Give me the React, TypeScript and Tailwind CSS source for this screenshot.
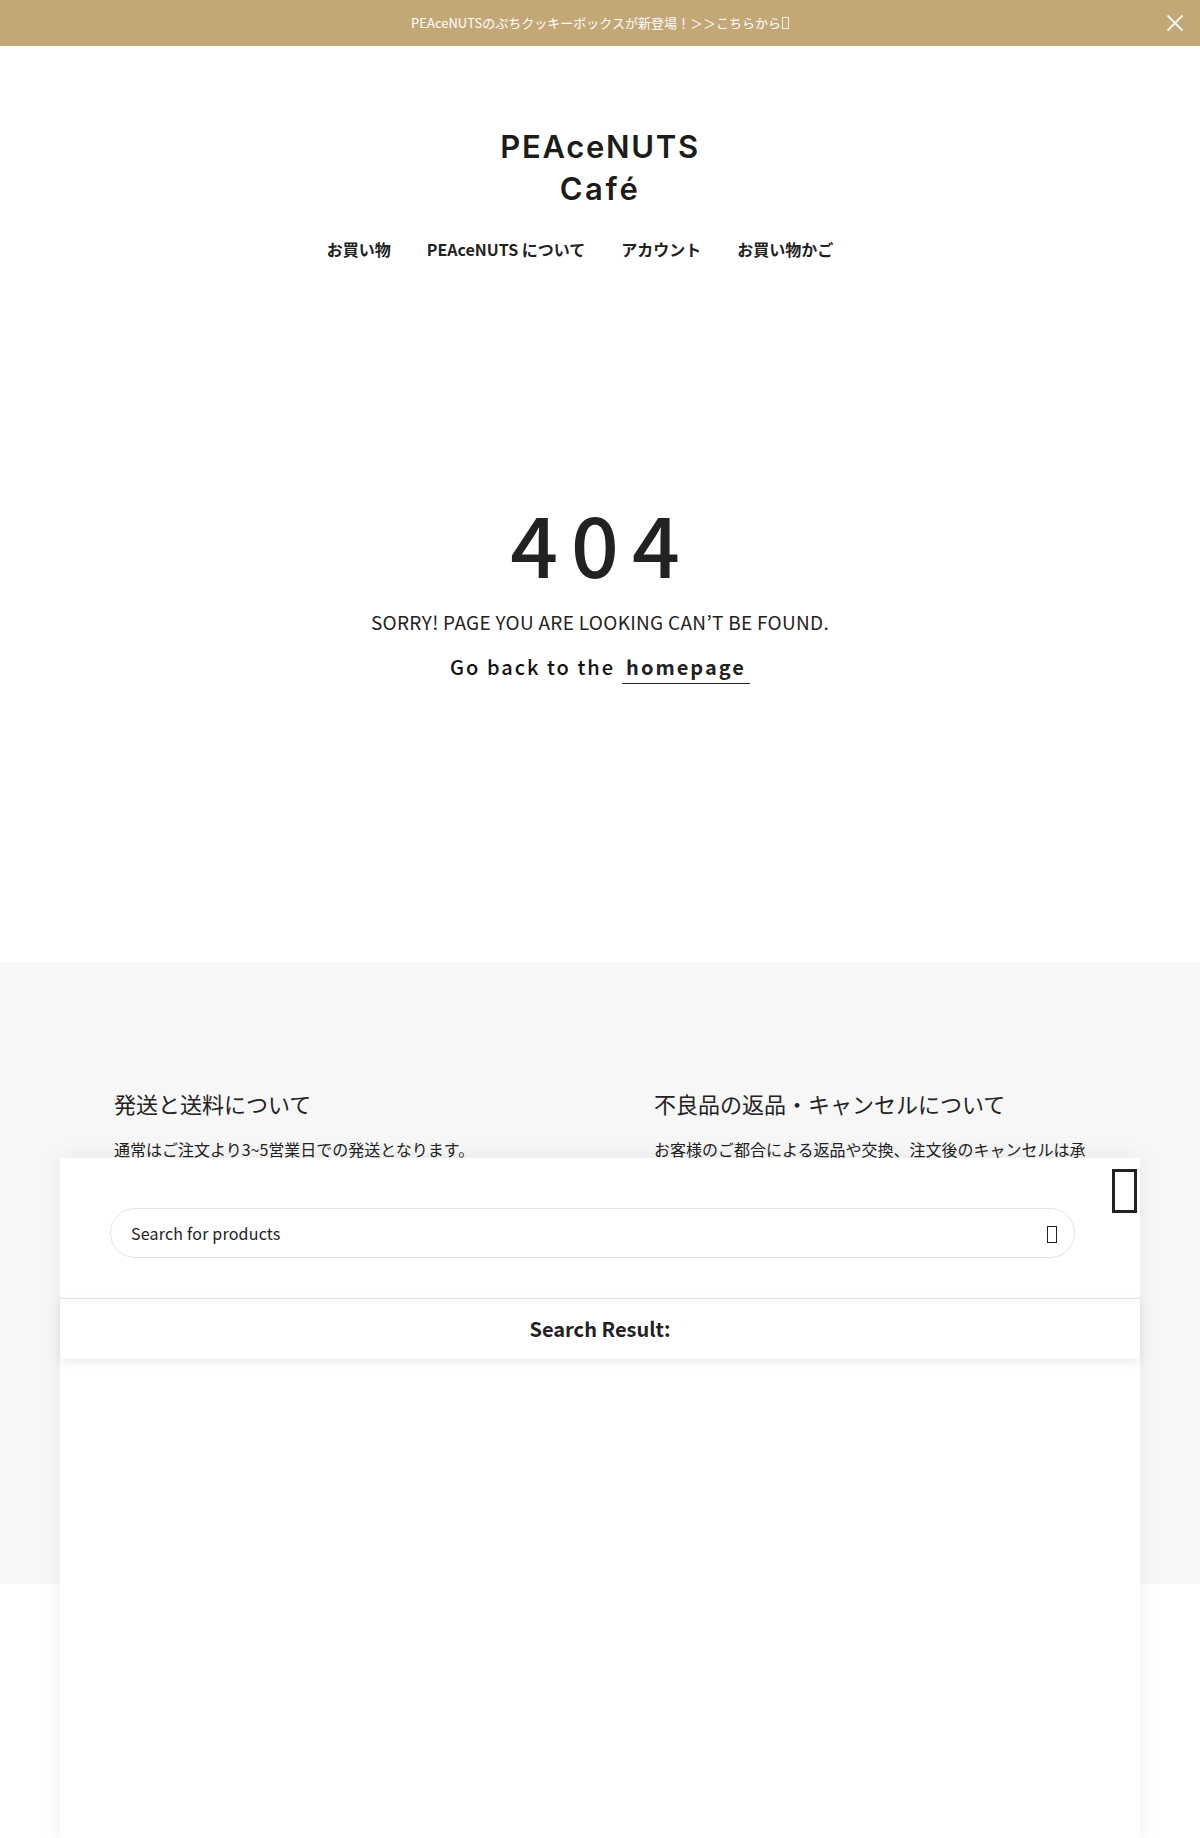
import React from "react";

const sans = "font-['Noto_Sans_CJK_JP','Noto_Sans',sans-serif]";

function Tofu({ className }: { className: string }) {
  return <span className={`inline-block border-[#222] ${className}`} />;
}

export default function App() {
  return (
    <div className={`relative h-[1838px] w-[1200px] overflow-hidden bg-white text-[#222] ${sans}`}>
      <div className="relative flex h-[46px] items-center justify-center bg-[#c4a777] text-[13px] text-white">
        <span className="flex items-center">
          PEAceNUTSのぷちクッキーボックスが新登場！＞＞こちらから
          <span className="ml-[1px] inline-block h-[12px] w-[7px] border border-white/80" />
        </span>
        <svg className="absolute right-[17px] top-[15px] h-[16px] w-[16px]" viewBox="0 0 16 16" fill="none" stroke="white" strokeWidth="1.8">
          <path d="M0.5 0.5L15.5 15.5M15.5 0.5L0.5 15.5" />
        </svg>
      </div>

      <header className="flex flex-col items-center pt-[80px]">
        <div className="flex flex-col items-center font-['Inter',sans-serif] text-[31px] font-semibold leading-[42px] tracking-[1.7px] text-[#1c1c1c]">
          <span>PEAceNUTS</span>
          <span className="tracking-[2.6px]">Café</span>
        </div>
        <nav className="mt-[27px] flex gap-[36px] pr-[40px] text-[16px] font-bold leading-[24px] text-[#222]">
          <span>お買い物</span>
          <span>PEAceNUTS について</span>
          <span>アカウント</span>
          <span>お買い物かご</span>
        </nav>
      </header>

      <main className="flex h-[701px] flex-col items-center pt-[236px]">
        <h1 className="ml-[3px] text-[84px] font-medium leading-[90px] tracking-[13px] text-[#222]">404</h1>
        <p className="mt-[21px] text-[19px] leading-[28px] tracking-[0.3px] text-[#222]">SORRY! PAGE YOU ARE LOOKING CAN’T BE FOUND.</p>
        <p className="mt-[16px] flex items-start text-[20px] font-medium leading-[30px] tracking-[2px] text-[#111]">
          <span>Go back to the</span>
          <span className="ml-[7px] border-b border-[#222] px-[4px] pb-[1px] font-semibold text-[#222]">homepage</span>
        </p>
      </main>

      <section className="grid h-[622px] grid-cols-[540px_1fr] bg-[#f7f7f7] pl-[114px] pr-[60px] pt-[123px]">
        <div>
          <h2 className="text-[22px] leading-[36px] text-[#222]">発送と送料について</h2>
          <p className="mt-[15px] text-[16px] leading-[26px] text-[#222]">通常はご注文より3~5営業日での発送となります。</p>
        </div>
        <div>
          <h2 className="text-[22px] leading-[36px] text-[#222]">不良品の返品・キャンセルについて</h2>
          <p className="mt-[15px] text-[16px] leading-[26px] text-[#222]">お客様のご都合による返品や交換、注文後のキャンセルは承</p>
        </div>
      </section>

      <div className="absolute left-[60px] top-[1158px] h-[680px] w-[1080px] bg-white shadow-[0_0_20px_rgba(0,0,0,0.07)]">
        <Tofu className="absolute right-[3px] top-[11px] h-[44px] w-[25px] border-[3px]" />
        <div className="px-[50px] pb-[40px] pt-[50px]">
          <div className="flex h-[50px] w-[965px] items-center justify-between rounded-full border border-[#e4e4e4] pl-[20px] pr-[17px] text-[16px] tracking-[0.2px] text-[#222]">
            <span>Search for products</span>
            <Tofu className="mt-[3px] h-[17px] w-[10px] border" />
          </div>
        </div>
        <div className="flex h-[61px] items-center justify-center border-t border-[#e4e4e4] text-[20px] font-semibold text-[#222] shadow-[0_3px_8px_rgba(0,0,0,0.08)]">
          Search Result:
        </div>
      </div>
    </div>
  );
}
